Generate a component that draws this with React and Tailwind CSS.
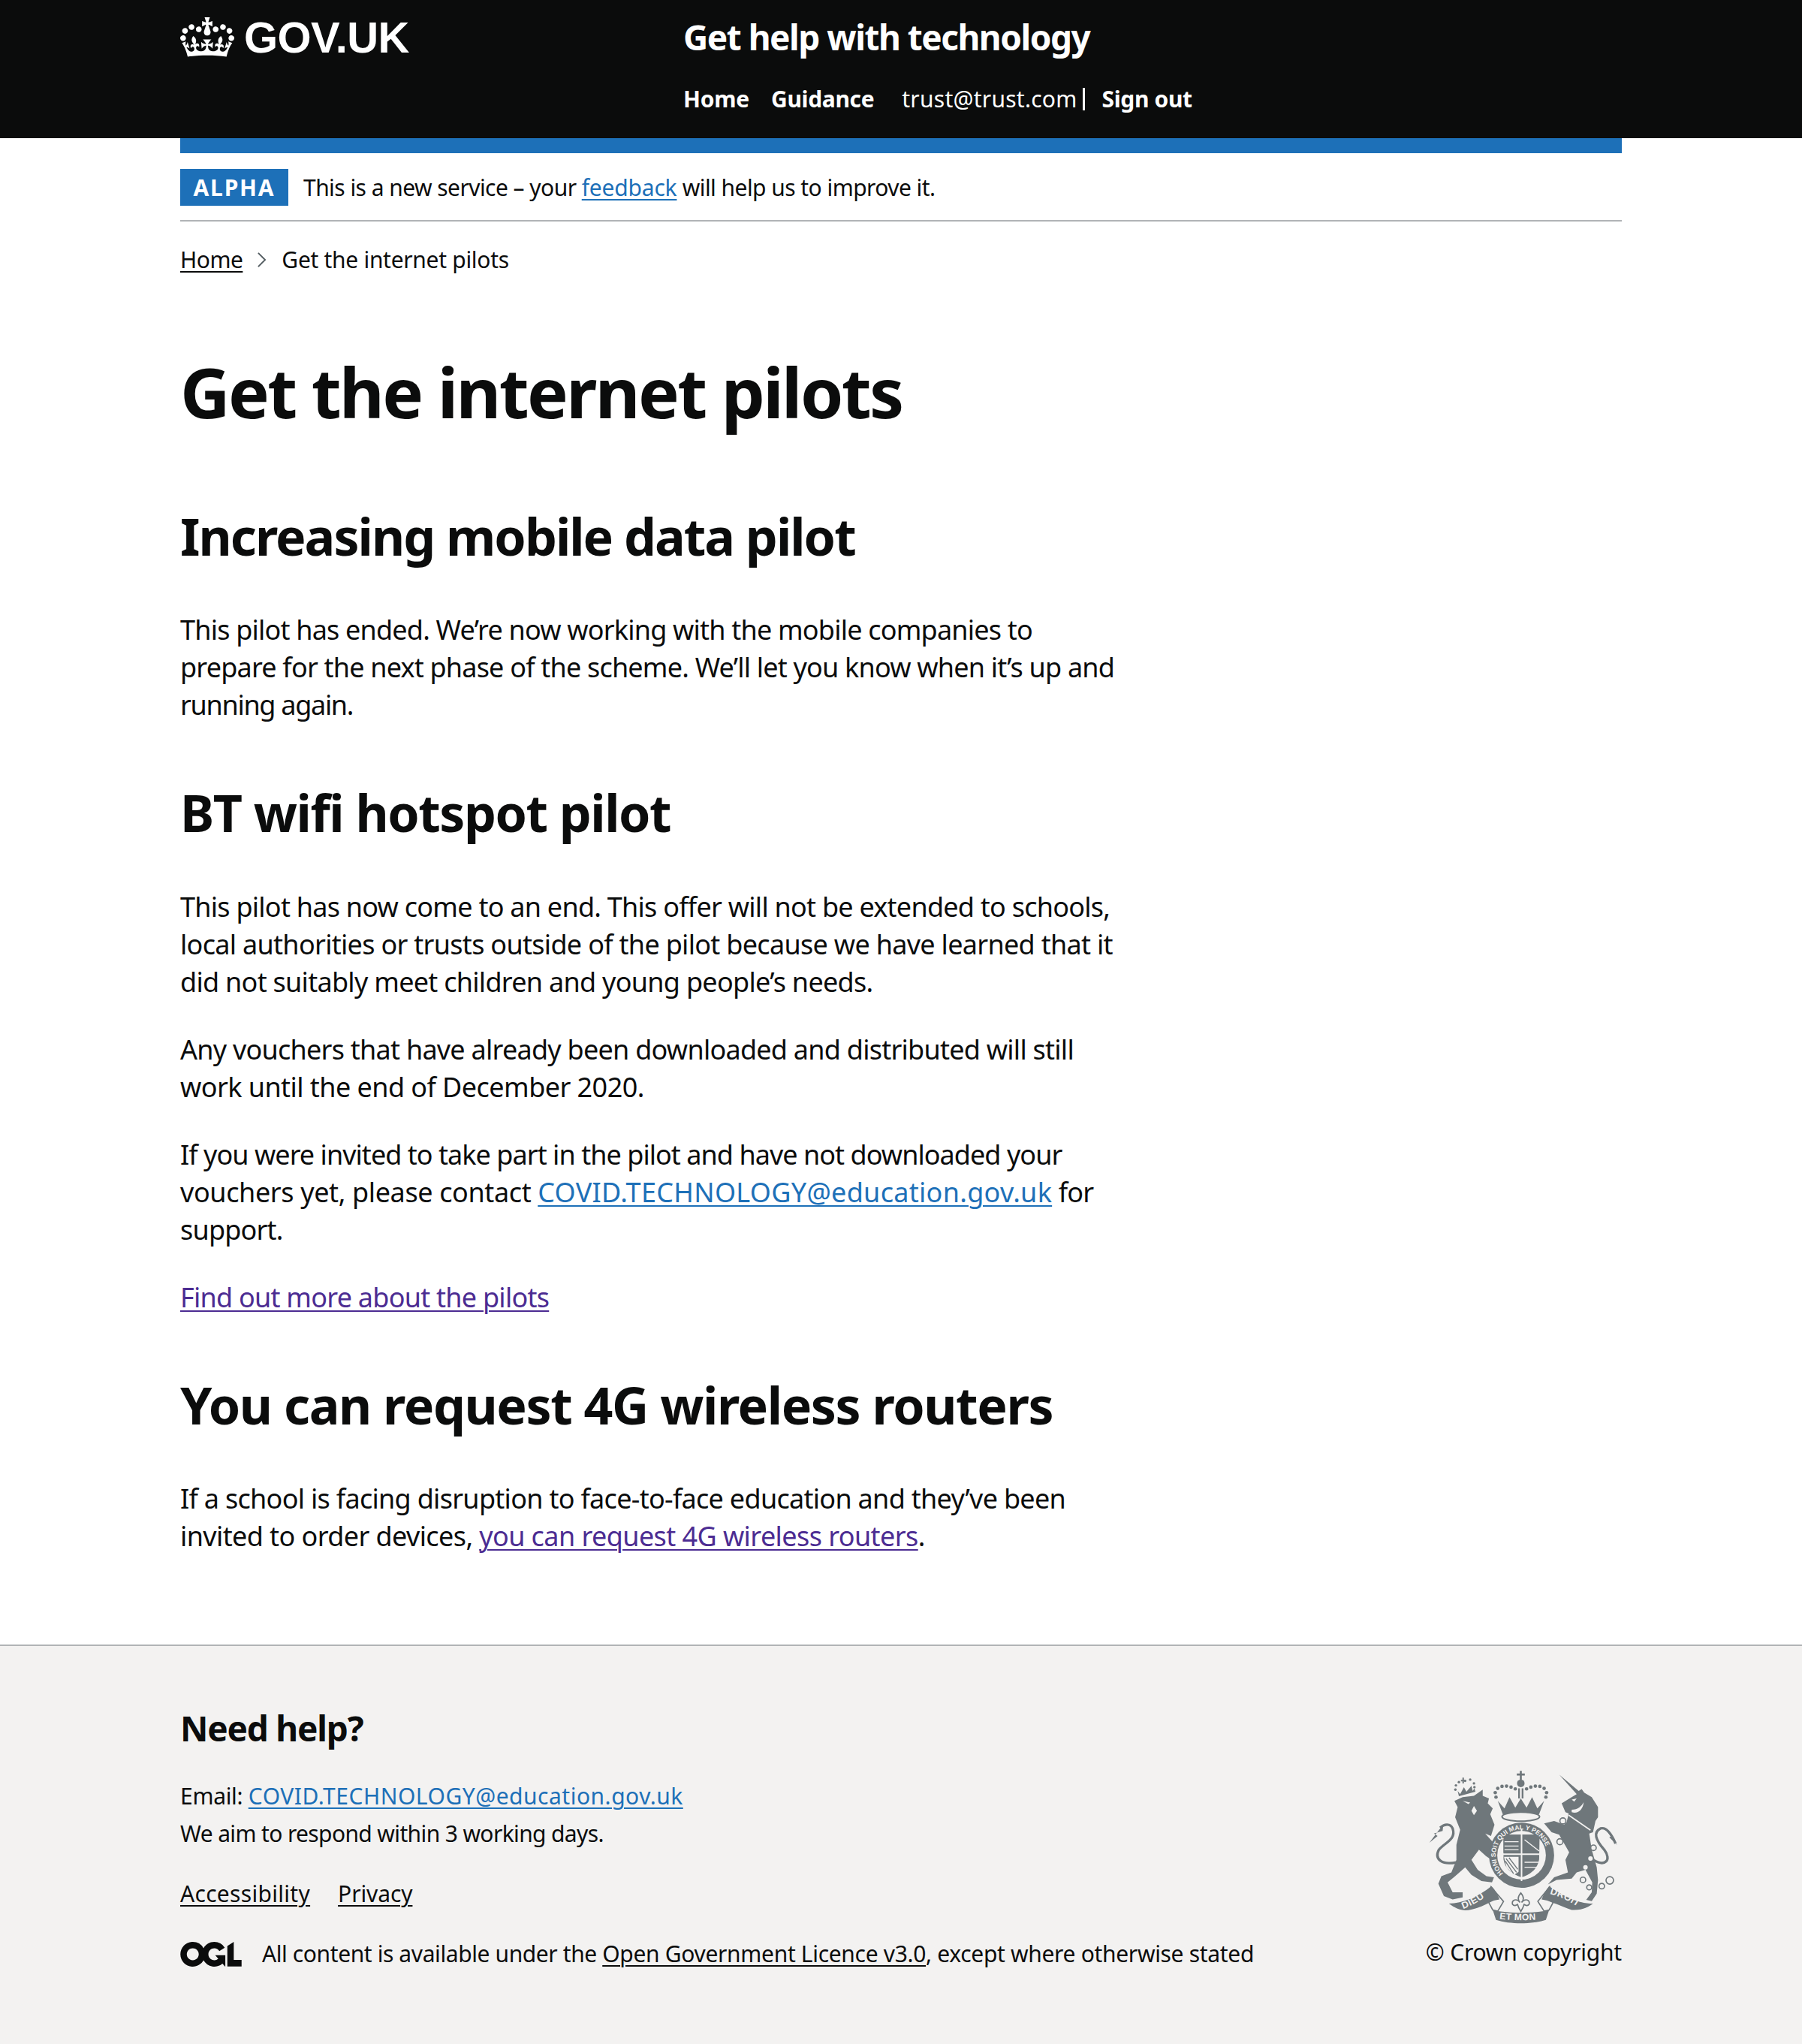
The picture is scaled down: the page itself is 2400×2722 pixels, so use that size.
import React from "react";

const crownPath =
  "M25 30.2c3.5 1.5 7.7-.2 9.1-3.7 1.5-3.6-.2-7.8-3.9-9.2-3.6-1.4-7.6.3-9.1 3.9-1.4 3.5.3 7.5 3.9 9zM9 39.5c3.6 1.5 7.8-.2 9.2-3.7 1.5-3.6-.2-7.8-3.9-9.1-3.6-1.5-7.6.2-9.1 3.8-1.4 3.5.3 7.5 3.8 9zM4.4 57.2c3.5 1.5 7.7-.2 9.1-3.8 1.5-3.6-.2-7.7-3.9-9.1-3.5-1.5-7.6.3-9.1 3.8-1.4 3.5.3 7.6 3.9 9.1zm38.3-21.4c3.5 1.5 7.7-.2 9.1-3.8 1.5-3.6-.2-7.7-3.9-9.1-3.6-1.5-7.6.3-9.1 3.8-1.3 3.6.4 7.7 3.9 9.1zm64.4-5.6c-3.6 1.5-7.8-.2-9.1-3.7-1.5-3.6.2-7.8 3.8-9.2 3.6-1.4 7.7.3 9.2 3.9 1.3 3.5-.4 7.5-3.9 9zm15.9 9.3c-3.6 1.5-7.7-.2-9.1-3.7-1.5-3.6.2-7.8 3.7-9.1 3.6-1.5 7.7.2 9.2 3.8 1.5 3.5-.3 7.5-3.8 9zm4.7 17.7c-3.6 1.5-7.8-.2-9.2-3.8-1.5-3.6.2-7.7 3.9-9.1 3.6-1.5 7.7.3 9.2 3.8 1.3 3.5-.4 7.6-3.9 9.1zM89.3 35.8c-3.6 1.5-7.8-.2-9.2-3.8-1.4-3.6.2-7.7 3.9-9.1 3.6-1.5 7.7.3 9.2 3.8 1.4 3.6-.3 7.7-3.9 9.1zM69.7 17.7l8.9 4.7V9.3l-8.9 2.8c-.2-.3-.5-.6-.9-.9L72.4 0H59.6l3.6 11.2c-.3.3-.6.5-.9.9l-8.8-2.8v13.1l8.8-4.7c.3.3.6.7.9.9l-5 15.4v.1c-.2.8-.4 1.6-.4 2.4 0 4.1 3.1 7.5 7 8.1h.2c.3 0 .7.1 1 .1.4 0 .7 0 1-.1h.2c4-.6 7.1-4.1 7.1-8.1 0-.8-.1-1.7-.4-2.4V34l-5.1-15.4c.4-.2.7-.6 1-.9zM66 92.8c16.9 0 32.8 1.1 47.1 3.2 4-16.9 8.9-26.7 14-33.5l-9.6-3.4c1 4.9 1.1 7.2 0 10.2-1.5-1.4-3-4.3-4.2-8.7L108.6 76c2.8-2 5-3.2 7.5-3.3-4.4 9.4-10 11.9-13.6 11.2-4.3-.8-6.3-4.6-5.6-7.9 1-4.7 5.7-5.9 8-.5 4.3-8.7-3-11.4-7.6-8.8 7.1-7.2 7.9-13.5 2.1-21.1-8 6.1-8.1 12.3-4.5 20.8-4.7-5.4-12.1-2.5-9.5 6.2 3.4-5.2 7.9-2 7.2 3.1-.6 4.3-6.4 7.8-13.5 7.2-10.3-.9-10.9-8-11.2-13.8 2.5-.5 7.1 1.8 11 7.3L80.2 60c-4.1 4.4-8 5.3-12.3 5.4 1.4-4.4 8-11.6 8-11.6H55.5s6.4 7.2 7.9 11.6c-4.2-.1-8-1-12.3-5.4l1.4 16.4c3.9-5.5 8.5-7.7 10.9-7.3-.3 5.8-.9 12.8-11.1 13.8-7.2.6-12.9-2.9-13.5-7.2-.7-5 3.8-8.3 7.1-3.1 2.7-8.7-4.6-11.6-9.4-6.2 3.7-8.5 3.6-14.7-4.6-20.8-5.8 7.6-5 13.9 2.2 21.1-4.7-2.6-11.9.1-7.7 8.8 2.3-5.5 7.1-4.2 8.1.5.7 3.3-1.3 7.1-5.7 7.9-3.5.7-9-1.8-13.5-11.2 2.5.1 4.7 1.3 7.5 3.3l-4.7-15.4c-1.2 4.4-2.7 7.2-4.3 8.7-1.1-3-.9-5.3 0-10.2l-9.5 3.4c5 6.9 9.9 16.7 14 33.5 14.8-2.1 30.8-3.2 47.7-3.2z";

const oglPath =
  "M421.5 142.8V.1l-50.7 32.3v161.1h112.4v-50.7zm-122.3-9.6A47.12 47.12 0 0 1 221 97.8c0-26 21.1-47.1 47.1-47.1 16.7 0 31.4 8.7 39.7 21.8l42.7-27.2A97.63 97.63 0 0 0 268.1 0c-36.5 0-68.3 20.1-85.1 49.7A98 98 0 0 0 97.8 0C43.9 0 0 43.9 0 97.8s43.9 97.8 97.8 97.8c36.5 0 68.3-20.1 85.1-49.7a97.76 97.76 0 0 0 149.6 25.4l19.4 22.2h3v-87.8h-80l24.3 27.5zM97.8 145c-26 0-47.1-21.1-47.1-47.1s21.1-47.1 47.1-47.1 47.2 21 47.2 47S123.8 145 97.8 145";

function Crest() {
  const dark = "#6f777b";
  const light = "#f3f2f1";
  const crownDots = [
    [338, 190], [335, 172], [345, 155], [362, 147], [380, 146], [398, 150], [415, 157],
    [460, 157], [477, 150], [495, 146], [513, 147], [530, 155], [540, 172], [537, 190],
  ];
  const lionDots = [
    [176, 160], [178, 143], [190, 130], [215, 125], [235, 120], [250, 135], [252, 150],
  ];
  const chains = [
    [605, 285, 12], [593, 368, 12], [727, 392, 11], [685, 520, 11], [710, 550, 10], [760, 545, 11], [792, 522, 15],
  ];
  return (
    <svg viewBox="70 85 755 610" className="w-[252px] h-[204px] block overflow-visible">
      <defs>
        <path id="garter" d="M374 501 A103 103 0 1 1 506 501" />
        <path id="dieu" d="M207 636 Q260 617 320 570" />
        <path id="etmon" d="M352 676 Q437 686 526 676" />
        <path id="droit" d="M552 576 Q620 593 680 640" />
      </defs>

      {/* lion */}
      <path
        fill={dark}
        d="M172 205 L205 190 L250 185 L285 160 L285 185 L310 195 L305 215 L325 235 L315 258 L332 300 L318 345 L295 335 L335 380 L338 420 L320 440 L298 425 L270 400 L240 440 L265 480 L300 505 L330 510 L322 530 L280 525 L240 500 L215 470 L175 505 L145 530 L165 570 L205 570 L205 590 L165 598 L130 585 L108 535 L120 505 L160 490 L180 440 L180 380 L195 320 L175 270 L185 230 Z"
      />
      <path
        fill="none"
        stroke={dark}
        strokeWidth="10"
        d="M180 450 C125 462 90 440 110 400 C135 370 180 360 165 315 C155 292 130 298 115 312"
      />
      <path fill={dark} d="M128 298 L72 372 L105 345 L90 335 L125 325 Z" />
      <path fill={light} d="M205 205 L235 212 L228 218 Z M250 225 L262 245 L250 262 L240 245 Z" />
      {lionDots.map(([x, y], i) => (
        <circle key={i} cx={x} cy={y} r="5" fill={dark} />
      ))}
      <path fill={dark} d="M185 165 L195 178 L210 150 L220 168 L240 145 L245 165 L252 155 L256 168 L190 186 Z" />
      <path stroke={dark} strokeWidth="6" d="M207 112 V135 M198 124 H216" />

      {/* unicorn */}
      <path
        fill={dark}
        d="M590 100 L668 165 L680 158 L690 172 L720 190 L745 230 L745 270 L735 285 L725 330 L710 335 L720 400 L740 470 L745 520 L740 575 L720 605 L698 600 L720 570 L722 530 L695 480 L660 490 L640 515 L580 520 L545 538 L570 510 L625 490 L615 440 L630 410 L610 375 L590 340 L560 330 L530 295 L570 285 L610 300 L620 290 L628 255 L615 250 L600 215 L640 190 L660 178 Z"
      />
      <path fill="none" stroke={light} strokeWidth="5" d="M628 262 L715 322" />
      <path fill={light} d="M640 200 L660 195 L650 208 Z M640 240 C665 240 680 225 688 210 C685 240 665 258 640 250 Z" />
      <circle cx="715" cy="435" r="9" fill={light} />
      <circle cx="695" cy="470" r="9" fill={light} />
      <path
        fill="none"
        stroke={dark}
        strokeWidth="10"
        d="M725 440 C775 470 800 440 770 400 C735 360 725 330 755 315 C780 308 800 340 815 375"
      />
      <path fill={dark} d="M770 312 L822 382 L790 350 L800 345 Z" />
      {chains.map(([x, y, r], i) => (
        <circle key={i} cx={x} cy={y} r={r} fill={light} stroke={dark} strokeWidth="5" />
      ))}

      {/* royal crown */}
      <path stroke={dark} strokeWidth="8" d="M437 85 V122 M421 100 H453" />
      <circle cx="437" cy="135" r="15" fill={dark} />
      <path stroke={dark} strokeWidth="7" d="M430 155 V195 M444 155 V195" />
      {crownDots.map(([x, y], i) => (
        <circle key={i} cx={x} cy={y} r="7" fill={dark} />
      ))}
      <path
        fill={dark}
        d="M345 205 L372 235 L392 190 L415 232 L437 195 L460 232 L482 190 L503 235 L530 205 L510 258 L365 258 Z"
      />
      <ellipse cx="437" cy="268" rx="75" ry="18" fill={light} stroke={dark} strokeWidth="6" />

      {/* garter and shield */}
      <circle cx="440" cy="422" r="130" fill={dark} />
      <circle cx="440" cy="422" r="97" fill={light} />
      <path fill={dark} d="M360 330 H520 L518 440 C510 490 470 510 440 520 C410 510 368 490 360 440 Z" transform="translate(44 42) scale(.9)" />
      <rect x="368" y="350" width="64" height="62" fill={dark} />
      <path stroke={light} strokeWidth="6" d="M440 318 V525 M350 418 H530" />
      <path fill={light} d="M370 428 L428 428 L428 488 L410 500 L380 470 Z" />
      <path stroke={dark} strokeWidth="4" d="M378 435 L420 490 M390 432 L425 478 M375 445 L408 495" />
      <path stroke={light} strokeWidth="4" d="M372 368 H428 M372 385 H428 M372 400 H428 M452 450 H510 M452 470 H505 M452 360 L510 405" />
      <text fill={light} fontSize="26" fontFamily="Liberation Sans, sans-serif" fontWeight="700">
        <textPath href="#garter" startOffset="2%">HONI SOIT QUI MAL Y PENSE</textPath>
      </text>

      {/* motto ribbon */}
      <path
        fill={light}
        stroke={dark}
        strokeWidth="5"
        d="M318 548 L368 606 L345 645 L325 640 L310 612 Z M552 548 L505 606 L530 645 L550 640 L565 612 Z"
      />
      <path
        fill={dark}
        d="M150 615 C205 612 265 590 320 545 C335 560 345 580 352 598 C335 600 322 604 310 612 C275 630 245 640 215 642 C190 640 170 630 150 615 Z"
      />
      <path fill={dark} d="M325 640 C390 655 490 655 550 640 L537 680 C480 698 395 698 338 680 Z" />
      <path
        fill={dark}
        d="M550 545 C600 580 660 615 725 615 C700 635 670 642 640 640 C610 630 585 618 565 612 C550 604 535 600 520 598 C527 580 538 560 550 545 Z"
      />
      <text fill={light} fontSize="38" fontFamily="Liberation Sans, sans-serif" fontWeight="700" letterSpacing="2">
        <textPath href="#dieu">DIEU</textPath>
      </text>
      <text fill={light} fontSize="36" fontFamily="Liberation Sans, sans-serif" fontWeight="700" letterSpacing="1">
        <textPath href="#etmon">ET MON</textPath>
      </text>
      <text fill={light} fontSize="38" fontFamily="Liberation Sans, sans-serif" fontWeight="700" letterSpacing="1">
        <textPath href="#droit">DROIT</textPath>
      </text>
      <path
        fill={light}
        stroke={dark}
        strokeWidth="5"
        d="M437 572 C452 590 448 602 440 610 C455 592 475 600 470 618 C462 628 455 620 450 618 L445 632 L437 646 L429 632 L424 618 C419 620 412 628 404 618 C399 600 420 592 434 610 C426 602 422 590 437 572 Z"
      />
    </svg>
  );
}

function Link({ color = "text-[#1d70b8]", className = "", children }) {
  return (
    <a href="#" className={`${color} ${className} underline decoration-2 underline-offset-[4px]`}>
      {children}
    </a>
  );
}

function H2({ mt = "mt-[78px]", tracking, children }) {
  return <h2 className={`${mt} ${tracking} text-[68px] leading-[80px] font-bold`}>{children}</h2>;
}

function P({ mt = "mt-[40px]", children }) {
  return <p className={`${mt} text-[36px] leading-[50px] tracking-[-0.8px]`}>{children}</p>;
}

export default function App() {
  return (
    <div className="font-['Noto_Sans',sans-serif] text-[#0b0c0c] bg-white h-[2722px] flex flex-col">
      <header className="bg-[#0b0c0c] h-[184px] shrink-0">
        <div className="mx-[240px] flex text-white">
          <div className="w-[670px] flex items-start gap-[13px] pt-[23px]">
            <svg viewBox="0 0 132 97" className="w-[72px] h-[53px] fill-white shrink-0">
              <path d={crownPath} />
            </svg>
            <span className="font-['Liberation_Sans',sans-serif] font-bold text-[58px] leading-[54px] tracking-[-0.6px]">
              GOV.UK
            </span>
          </div>
          <div className="pt-[21px]">
            <div className="text-[46px] leading-[56px] font-bold tracking-[-1.5px]">Get help with technology</div>
            <div className="mt-[35px] flex items-center text-[30px] leading-[40px]">
              <span className="font-bold tracking-[-0.2px]">Home</span>
              <span className="font-bold tracking-[-0.35px] ml-[29px]">Guidance</span>
              <span className="ml-[37px] tracking-[0.25px]">trust@trust.com</span>
              <span className="ml-[7px] w-[3px] h-[30px] bg-white"></span>
              <span className="font-bold tracking-[-0.35px] ml-[23px]">Sign out</span>
            </div>
          </div>
        </div>
      </header>

      <div className="mx-[240px] flex-1">
        <div className="h-[20px] bg-[#1d70b8]"></div>
        <div className="flex items-center h-[91px] border-b-[2px] border-[#b1b4b6] pb-[20px] pt-[21px]">
          <strong className="bg-[#1d70b8] text-white h-[49px] w-[144px] justify-center flex items-center text-[30px] font-bold tracking-[1.8px]">
            ALPHA
          </strong>
          <span className="ml-[20px] text-[30px] tracking-[-0.55px]">
            This is a new service – your <Link className="tracking-[-0.2px]">feedback</Link> will help us to improve it.
          </span>
        </div>
        <nav className="flex items-center mt-[31px] text-[30px] leading-[40px]">
          <a href="#" className="underline decoration-2 underline-offset-[4px] tracking-[-0.5px]">Home</a>
          <svg viewBox="0 0 14 24" className="w-[13px] h-[22px] ml-[19px] mr-[20px] text-[#505a5f]" fill="none" stroke="currentColor" strokeWidth="2">
            <path d="M2 2 L12 12 L2 22" />
          </svg>
          <span className="tracking-[-0.3px]">Get the internet pilots</span>
        </nav>

        <h1 className="mt-[104px] text-[92px] leading-[104px] font-bold tracking-[-2.65px]">Get the internet pilots</h1>

        <H2 mt="mt-[100px]" tracking="tracking-[-1.95px]">Increasing mobile data pilot</H2>
        <P mt="mt-[60px]">
          This pilot has ended. We’re now working with the mobile companies to
          <br />
          prepare for the next phase of the scheme. We’ll let you know when it’s up and
          <br />
          <span className="tracking-[-1.3px]">running again.</span>
        </P>

        <H2 tracking="tracking-[-1.45px]">BT wifi hotspot pilot</H2>
        <P mt="mt-[61px]">
          <span className="tracking-[-0.75px]">This pilot has now come to an end. This offer will not be extended to schools,</span>
          <br />
          <span className="tracking-[-0.7px]">local authorities or trusts outside of the pilot because we have learned that it</span>
          <br />
          <span className="tracking-[-0.72px]">did not suitably meet children and young people’s needs.</span>
        </P>
        <P>
          <span className="tracking-[-0.75px]">Any vouchers that have already been downloaded and distributed will still</span>
          <br />
          <span className="tracking-[-0.56px]">work until the end of December 2020.</span>
        </P>
        <P>
          <span className="tracking-[-0.96px]">If you were invited to take part in the pilot and have not downloaded your</span>
          <br />
          <span className="tracking-[-0.38px]">vouchers yet, please contact </span>
          <Link className="tracking-[0.3px]">COVID.TECHNOLOGY@education.gov.uk</Link> for
          <br />
          support.
        </P>
        <P>
          <Link color="text-[#4c2c92]" className="tracking-[-0.75px]">Find out more about the pilots</Link>
        </P>

        <H2 tracking="tracking-[-1.4px]">You can request 4G wireless routers</H2>
        <P mt="mt-[60px]">
          <span className="tracking-[-0.71px]">If a school is facing disruption to face-to-face education and they’ve been</span>
          <br />
          <span className="tracking-[-0.6px]">invited to order devices, </span>
          <Link color="text-[#4c2c92]" className="tracking-[-0.58px]">you can request 4G wireless routers</Link>.
        </P>
      </div>

      <footer className="h-[532px] shrink-0 bg-[#f3f2f1] border-t-[2px] border-[#b1b4b6] px-[240px] pt-[81px] flex justify-between text-[30px] leading-[50px]">
        <div>
          <h2 className="text-[46px] leading-[56px] font-bold tracking-[-1.2px]">Need help?</h2>
          <div className="mt-[38px]">
            <span className="tracking-[-0.3px]">Email: </span>
            <Link className="tracking-[0.5px]">COVID.TECHNOLOGY@education.gov.uk</Link>
          </div>
          <div className="tracking-[-0.63px]">We aim to respond within 3 working days.</div>
          <div className="mt-[30px] flex gap-[37px] tracking-[0.3px]">
            <a href="#" className="underline decoration-2 underline-offset-[4px]">Accessibility</a>
            <a href="#" className="underline decoration-2 underline-offset-[4px] tracking-[-0.1px]">Privacy</a>
          </div>
          <div className="mt-[30px] flex items-center tracking-[-0.32px]">
            <svg viewBox="0 0 483.2 195.7" className="w-[82px] h-[33px] fill-[#0b0c0c] mr-[27px]">
              <path d={oglPath} />
            </svg>
            <span>
              <span className="tracking-[-0.4px]">All content is available under the </span>
              <a href="#" className="underline decoration-2 underline-offset-[4px]">Open Government Licence v3.0</a>, except where otherwise stated
            </span>
          </div>
        </div>
        <div className="flex flex-col items-end">
          <div className="mt-[85px] mr-[5px]">
            <Crest />
          </div>
          <div className="mt-[13px] tracking-[-0.2px]">© Crown copyright</div>
        </div>
      </footer>
    </div>
  );
}
